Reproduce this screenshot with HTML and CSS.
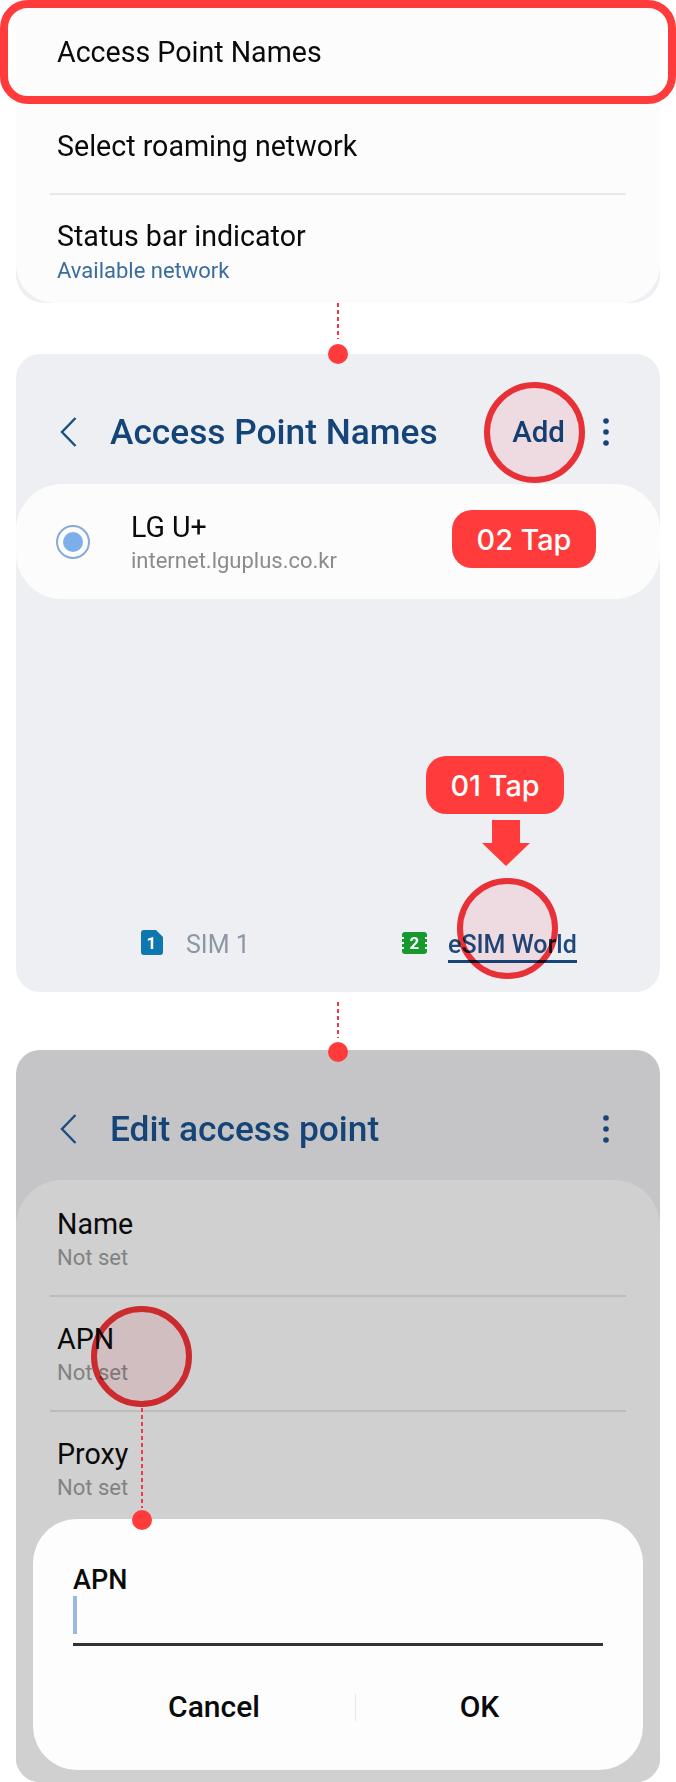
FILE: index.html
```html
<!DOCTYPE html>
<html lang="en">
<head>
<meta charset="utf-8">
<title>Access Point Names</title>
<link rel="stylesheet" href="styles.css">
</head>
<body>
<main class="page">
  <section class="panel panel-settings">
    <div class="list list-settings">
      <div class="row row-first"><div class="row-title">Access Point Names</div></div>
      <div class="row row-second"><div class="row-title">Select roaming network</div></div>
      <hr class="divider">
      <div class="row row-third">
        <div class="row-title">Status bar indicator</div>
        <div class="row-sub row-sub-link">Available network</div>
      </div>
    </div>
  </section>
  <div class="highlight"></div>

  <div class="connector connector-a"><span class="dash"></span><span class="dot"></span></div>

  <section class="panel panel-apn">
    <header class="app-bar">
      <svg class="chevron" viewBox="0 0 17 30" aria-hidden="true"><path d="M15.5 1 2 15l13.5 14"/></svg>
      <h1 class="app-title">Access Point Names</h1>
      <span class="app-action">Add</span>
      <svg class="more" viewBox="0 0 6 28" aria-hidden="true"><circle cx="3" cy="3" r="2.8"/><circle cx="3" cy="14" r="2.8"/><circle cx="3" cy="25" r="2.8"/></svg>
    </header>
    <div class="list list-apn">
      <span class="radio"><span class="radio-dot"></span></span>
      <div class="apn-text">
        <div class="row-title">LG U+</div>
        <div class="row-sub">internet.lguplus.co.kr</div>
      </div>
    </div>
    <nav class="tabs">
      <div class="tab">
        <svg class="sim-icon" viewBox="0 0 22 25" aria-hidden="true"><path class="sim-blue" d="M3 0h12l7 7v15a3 3 0 0 1-3 3H3a3 3 0 0 1-3-3V3a3 3 0 0 1 3-3z"/><text class="sim-num" x="10.5" y="19">1</text></svg>
        <span class="tab-label">SIM 1</span>
      </div>
      <div class="tab">
        <svg class="chip-icon" viewBox="0 0 25 22" aria-hidden="true"><path class="sim-green" d="M3 0h19a3 3 0 0 1 3 3v2h-2v2h2v3h-2v2h2v3h-2v2h2v2a3 3 0 0 1-3 3H3a3 3 0 0 1-3-3v-2h2v-2H0v-3h2v-2H0V7h2V5H0V3a3 3 0 0 1 3-3z"/><text class="sim-num" x="12.500" y="17">2</text></svg>
        <span class="tab-label tab-active">eSIM World</span>
      </div>
    </nav>

    <div class="ring ring-add"></div>
    <div class="tap tap-two">02 Tap</div>
    <div class="tap tap-one">01 Tap</div>
    <svg class="arrow" viewBox="0 0 48 46" aria-hidden="true"><path d="M10 0h28v23h10L24 46 0 23h10z"/></svg>
    <div class="ring ring-tab"></div>
  </section>

  <div class="connector connector-b"><span class="dash"></span><span class="dot"></span></div>

  <section class="panel panel-edit">
    <header class="app-bar app-bar-edit">
      <svg class="chevron" viewBox="0 0 17 30" aria-hidden="true"><path d="M15.5 1 2 15l13.5 14"/></svg>
      <h1 class="app-title">Edit access point</h1>
      <svg class="more more-solo" viewBox="0 0 6 28" aria-hidden="true"><circle cx="3" cy="3" r="2.8"/><circle cx="3" cy="14" r="2.8"/><circle cx="3" cy="25" r="2.8"/></svg>
    </header>
    <div class="list list-edit">
      <div class="row row-edit">
        <div class="row-title">Name</div>
        <div class="row-sub row-sub-muted">Not set</div>
      </div>
      <hr class="divider divider-dim">
      <div class="row row-edit">
        <div class="row-title">APN</div>
        <div class="row-sub row-sub-muted">Not set</div>
      </div>
      <hr class="divider divider-dim">
      <div class="row row-edit">
        <div class="row-title">Proxy</div>
        <div class="row-sub row-sub-muted">Not set</div>
      </div>
    </div>

    <div class="ring ring-apn"></div>
    <span class="dash dash-apn"></span>

    <div class="dialog">
      <span class="dot dot-dialog"></span>
      <div class="dialog-label">APN</div>
      <div class="field"><span class="caret"></span></div>
      <div class="dialog-actions">
        <span class="dialog-btn">Cancel</span>
        <span class="action-sep"></span>
        <span class="dialog-btn">OK</span>
      </div>
    </div>
  </section>
</main>
</body>
</html>
```

FILE: styles.css
```css
* { box-sizing: border-box; }

html, body {
  margin: 0;
  padding: 0;
  background: #ffffff;
}

body {
  font-family: Roboto, "Liberation Sans", sans-serif;
  color: #0a0a0a;
}

.page {
  position: relative;
  width: 676px;
  height: 1782px;
  overflow: hidden;
}

.panel {
  position: relative;
  margin: 0 16px;
  background: #eeeff3;
}

.panel-settings {
  height: 303px;
  border-radius: 0 0 28px 28px;
}

.panel-apn {
  height: 638px;
  border-radius: 24px;
  display: flex;
  flex-direction: column;
}

.panel-edit {
  height: 732px;
  display: flex;
  flex-direction: column;
  background: #c5c5c8;
  border-radius: 24px;
  overflow: hidden;
}

.list {
  background: #fcfcfc;
}

.list-settings {
  height: 303px;
  border-radius: 0 0 38px 38px;
}

.list-edit {
  flex: 1;
  margin-top: 31px;
  padding-top: 2px;
  background: #d0d0d0;
  border-radius: 46px 46px 0 0;
}

.row {
  padding-left: 41px;
}

.row-first { height: 104px; padding-top: 36px; }
.row-second { height: 89px; padding-top: 26px; }
.row-third { padding-top: 25px; }
.row-edit { height: 113px; padding-top: 26px; }

.row-title {
  font-size: 28.6px;
  line-height: 32px;
}

.row-sub {
  margin-top: 4px;
  font-size: 22px;
  line-height: 28px;
  color: #8b8b8b;
}

.row-sub-link { margin-top: 5px; color: #3a6c9e; }
.row-sub-muted { color: #828282; }

.divider {
  height: 2px;
  margin: 0 34px;
  border: 0;
  background: #e8e8ea;
}

.divider-dim { background: #bcbcbc; }

.highlight {
  position: absolute;
  left: 0;
  top: 0;
  width: 676px;
  height: 104px;
  border: 8px solid #ff3b3b;
  border-radius: 28px;
}

.connector {
  position: relative;
  display: flex;
  justify-content: center;
}

.connector-a { height: 51px; }
.connector-b { height: 58px; padding-top: 10px; }
.connector-b .dot { bottom: -12px; }

.dash {
  display: block;
  width: 2px;
  height: 36px;
  background: repeating-linear-gradient(to bottom, #f0394a 0 4px, transparent 4px 7px);
}

.dot {
  position: absolute;
  width: 20px;
  height: 20px;
  border-radius: 50%;
  background: #ff3b3b;
  left: 328px;
  bottom: -10px;
  z-index: 2;
}

.app-bar {
  display: flex;
  align-items: center;
  flex: none;
  height: 40px;
  margin-top: 58px;
  padding: 0 51px 0 44px;
}

.app-bar-edit { margin-top: 59px; }

.chevron {
  width: 17px;
  height: 30px;
  flex: none;
  fill: none;
  stroke: #1c4d83;
  stroke-width: 2.4;
}

.app-title {
  margin: 0 0 0 33px;
  font-size: 35.3px;
  line-height: 40px;
  font-weight: 500;
  color: #144478;
}

.app-action {
  margin-left: auto;
  font-size: 29.5px;
  line-height: 40px;
  font-weight: 500;
  color: #144478;
}

.more {
  width: 6px;
  height: 28px;
  margin-left: 38px;
  flex: none;
  fill: #144478;
}

.more-solo { margin-left: auto; }

.list-apn {
  display: flex;
  align-items: center;
  gap: 41px;
  height: 115px;
  flex: none;
  margin-top: 32px;
  padding-left: 40px;
  border-radius: 46px;
}

.apn-text {
  align-self: flex-start;
  padding-top: 27px;
}

.radio {
  display: flex;
  align-items: center;
  justify-content: center;
  width: 34px;
  height: 34px;
  flex: none;
  border: 2px solid #86abd9;
  border-radius: 50%;
}

.radio-dot {
  width: 20px;
  height: 20px;
  border-radius: 50%;
  background: #7caeea;
}

.tabs {
  display: grid;
  grid-template-columns: 261px 1fr;
  margin-top: auto;
  padding: 0 0 29px 125px;
}

.tab {
  display: flex;
  align-items: flex-start;
}

.sim-icon { width: 22px; height: 25px; flex: none; }
.chip-icon { width: 25px; height: 22px; margin-top: 2px; flex: none; }
.sim-blue { fill: #0e77b0; }
.sim-green { fill: #17992f; }

.sim-num {
  fill: #ffffff;
  font-size: 17px;
  font-weight: 700;
  text-anchor: middle;
}

.tab-label {
  margin-left: 23px;
  font-size: 25px;
  line-height: 30px;
  color: #8d96a5;
}

.tab-active {
  margin-left: 21px;
  border-bottom: 3px solid #17467e;
  font-weight: 500;
  color: #1f4a7d;
}

.ring {
  position: absolute;
  width: 101px;
  height: 101px;
  border: 6px solid #f93339;
  border-radius: 50%;
  background: #ffe9ec;
  mix-blend-mode: multiply;
}

.ring-add { left: 468px; top: 28px; }
.ring-tab { left: 441px; top: 524px; }
.ring-apn { left: 75px; top: 256px; }

.tap {
  position: absolute;
  display: flex;
  align-items: center;
  justify-content: center;
  height: 58px;
  border-radius: 20px;
  background: #ff3b3b;
  color: #ffffff;
  font-family: Inter, Roboto, sans-serif;
  font-size: 28.8px;
  font-weight: 500;
}

.tap-two { left: 436px; top: 156px; width: 144px; }
.tap-one { left: 410px; top: 402px; width: 138px; }

.arrow {
  position: absolute;
  left: 466px;
  top: 466px;
  width: 48px;
  height: 46px;
  fill: #ff3b3b;
}

.dash-apn {
  position: absolute;
  left: 125px;
  top: 358px;
  height: 100px;
}

.dialog {
  position: absolute;
  left: 17px;
  right: 17px;
  top: 469px;
  bottom: 12px;
  padding: 46px 40px 0;
  background: #fdfdfd;
  border-radius: 44px;
}

.dot-dialog {
  left: 99px;
  top: -9px;
  bottom: auto;
}

.dialog-label {
  font-size: 27px;
  line-height: 30px;
  font-weight: 500;
}

.field {
  height: 50px;
  margin-top: 1px;
  border-bottom: 3px solid #333333;
}

.caret {
  display: block;
  width: 4px;
  height: 38px;
  background: #9ab9e0;
}

.dialog-actions {
  display: grid;
  grid-template-columns: 282px 1px 1fr;
  align-items: center;
  margin-top: 43px;
  text-align: center;
}

.dialog-btn {
  font-size: 30px;
  line-height: 36px;
  font-weight: 500;
}

.action-sep {
  height: 27px;
  background: #e6e6e6;
}
```
